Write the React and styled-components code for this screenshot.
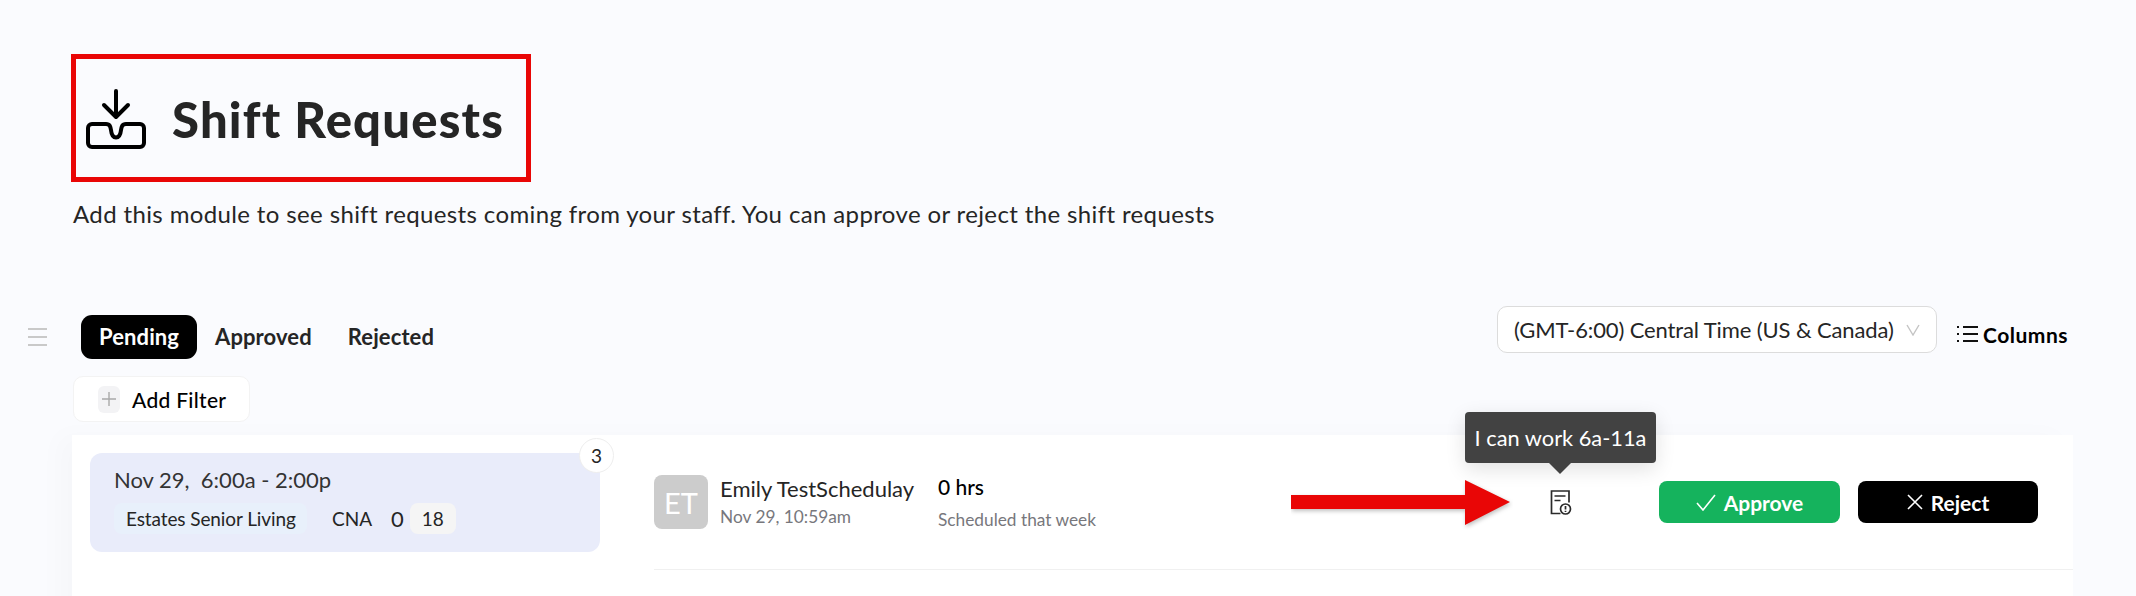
import React from "react";
import styled, { createGlobalStyle } from "styled-components";

const GlobalStyle = createGlobalStyle`
  html, body {
    margin: 0;
    padding: 0;
    background: #fafbfe;
    font-family: "Lato", "Noto Sans", sans-serif;
    color: #252525;
  }
  * {
    box-sizing: border-box;
  }
`;

const Page = styled.div`
  height: 596px;
  overflow: hidden;
  padding: 54px 63px 0 28px;
`;

const TitleBox = styled.div`
  display: flex;
  align-items: center;
  gap: 26px;
  width: 460px;
  height: 128px;
  margin-left: 43px;
  padding: 2px 0 0 10px;
  border: 5px solid #e90606;
`;

const Title = styled.h1`
  margin: 0;
  font-size: 49px;
  font-weight: 900;
  letter-spacing: 1.2px;
  color: #252525;
`;

const Subtitle = styled.p`
  margin: 18px 0 0 45px;
  font-size: 24px;
  line-height: 28px;
  letter-spacing: 0.37px;
  color: #252525;
`;

const TopRow = styled.div`
  display: flex;
  justify-content: space-between;
  height: 70px;
  margin-top: 78px;
`;

const LeftGroup = styled.div`
  display: flex;
  align-items: flex-start;
  padding-top: 9px;
`;

const Handle = styled.div`
  display: flex;
  flex-direction: column;
  gap: 6px;
  width: 19px;
  margin: 13px 34px 0 0;

  span {
    height: 2px;
    background: #c9c9c9;
  }
`;

const Tab = styled.div`
  display: flex;
  align-items: center;
  height: 44px;
  padding: 0 18px 2px;
  border-radius: 11px;
  font-size: 22px;
  font-weight: 700;
  letter-spacing: 0.1px;
  color: ${(props) => (props.active ? "#fff" : "#252525")};
  background: ${(props) => (props.active ? "#000" : "transparent")};
`;

const RightGroup = styled.div`
  display: flex;
  align-items: flex-start;
  padding-right: 5px;
`;

const ZoneSelect = styled.div`
  display: flex;
  align-items: center;
  justify-content: space-between;
  width: 440px;
  height: 47px;
  padding: 0 16px;
  background: #fff;
  border: 1px solid #dcdcdc;
  border-radius: 10px;
  font-size: 22px;
  letter-spacing: -0.12px;
  color: #252525;
`;

const ColumnsButton = styled.div`
  display: flex;
  align-items: center;
  gap: 5px;
  height: 24px;
  margin: 16px 0 0 20px;
  font-size: 21px;
  font-weight: 700;
  letter-spacing: 0.5px;
  color: #000;
`;

const FilterButton = styled.div`
  display: flex;
  align-items: center;
  gap: 12px;
  width: 177px;
  height: 46px;
  margin-left: 45px;
  padding-left: 24px;
  background: #fff;
  border: 1px solid #f3f3f3;
  border-radius: 10px;
  font-size: 21px;
  font-weight: 500;
  letter-spacing: 0.3px;
  color: #000;
`;

const PlusBox = styled.span`
  display: flex;
  align-items: center;
  justify-content: center;
  width: 22px;
  height: 27px;
  background: #f3f3f5;
  border-radius: 6px;
`;

const Panel = styled.section`
  display: flex;
  align-items: flex-start;
  height: 300px;
  margin: 13px 0 0 44px;
  padding: 0 0 0 18px;
  background: #fff;
  box-shadow: -14px 0 24px rgba(0, 0, 0, 0.02);
`;

const ShiftCard = styled.div`
  position: relative;
  flex: none;
  width: 510px;
  height: 99px;
  margin-top: 18px;
  padding: 14px 24px;
  background: #e9ecfa;
  border-radius: 12px;
`;

const CountBadge = styled.span`
  position: absolute;
  top: -15px;
  right: -14px;
  display: flex;
  align-items: center;
  justify-content: center;
  width: 35px;
  height: 35px;
  background: #fff;
  border: 1px solid #eeeeee;
  border-radius: 50%;
  font-size: 19px;
  color: #252525;
`;

const ShiftTime = styled.div`
  font-size: 22px;
  line-height: 26px;
  color: #333;
  white-space: pre;
`;

const ShiftMeta = styled.div`
  display: flex;
  align-items: center;
  margin-top: 10px;
  font-size: 19px;
  color: #252525;
`;

const SiteChip = styled.span`
  display: flex;
  align-items: center;
  width: 193px;
  height: 31px;
  padding-left: 12px;
  background: #e8f0fb;
  border-radius: 8px;
  letter-spacing: -0.1px;
`;

const Role = styled.span`
  margin-left: 25px;
`;

const FilledCount = styled.span`
  margin: 0 6px 0 19px;
  font-size: 22px;
`;

const NeededChip = styled.span`
  display: flex;
  align-items: center;
  justify-content: center;
  width: 46px;
  height: 31px;
  background: #f5f5f5;
  border-radius: 8px;
`;

const RequestRow = styled.div`
  flex: 1;
  display: flex;
  align-items: center;
  height: 135px;
  margin-left: 54px;
  padding-right: 35px;
  border-bottom: 1px solid #f0f0f0;
`;

const Avatar = styled.div`
  flex: none;
  display: flex;
  align-items: center;
  justify-content: center;
  width: 54px;
  height: 54px;
  background: #cccccc;
  border-radius: 8px;
  font-size: 29px;
  color: #fff;
`;

const Person = styled.div`
  width: 218px;
  margin-left: 12px;
`;

const PersonName = styled.div`
  font-size: 22px;
  line-height: 28px;
  color: #252525;
`;

const MutedText = styled.div`
  margin-top: ${(props) => props.top || 2}px;
  font-size: 17.3px;
  line-height: 24px;
  color: #77777c;
`;

const Hours = styled.div`
  flex: 1;
`;

const HoursValue = styled.div`
  font-size: 21px;
  font-weight: 500;
  line-height: 28px;
  color: #000;
`;

const NoteIcon = styled.div`
  position: relative;
  width: 22px;
  height: 25px;
  margin-right: 87px;
`;

const Tooltip = styled.div`
  position: absolute;
  bottom: 52px;
  left: -85px;
  display: flex;
  align-items: center;
  justify-content: center;
  width: 191px;
  height: 51px;
  background: #424242;
  border-radius: 4px;
  box-shadow: 0 6px 20px rgba(0, 0, 0, 0.12);
  font-size: 21.8px;
  color: #fff;
  white-space: nowrap;

  &::after {
    content: "";
    position: absolute;
    top: 100%;
    left: 84px;
    border: 11px solid transparent;
    border-top-color: #424242;
    border-bottom: 0;
  }
`;

const RedArrow = styled.svg`
  position: absolute;
  top: -10px;
  left: -259px;
`;

const ActionButton = styled.div`
  flex: none;
  display: flex;
  align-items: center;
  justify-content: center;
  gap: 8px;
  width: ${(props) => props.width}px;
  height: 42px;
  margin-left: ${(props) => props.gap || 0}px;
  background: ${(props) => props.bg};
  border-radius: 8px;
  font-size: 21px;
  font-weight: 700;
  color: #fff;
`;

const InboxIcon = () => (
  <svg width="60" height="60" viewBox="0 0 60 60" fill="none" stroke="#000" strokeWidth="4" strokeLinecap="round" strokeLinejoin="round">
    <path d="M30 2V27" />
    <path d="M18 16L30 28L42 16" />
    <path d="M20 35C24 35 24.5 38 25 41C26 51 34 51 35 41C35.5 38 36 35 40 35H54a4 4 0 0 1 4 4V54a4 4 0 0 1 -4 4H6a4 4 0 0 1 -4 -4V39a4 4 0 0 1 4 -4Z" />
  </svg>
);

const NoteGlyph = () => (
  <svg width="22" height="25" viewBox="0 0 22 25" fill="none" stroke="#2a2a2a" strokeWidth="1.7">
    <path d="M10.5 23.5H1.5V1H19V12.5" />
    <path d="M4.5 6H15.5M4.5 10.5H10.5" />
    <circle cx="15.5" cy="19" r="5" />
    <path d="M15.5 16V19.6M15.5 20.8V22" />
  </svg>
);

const App = () => (
  <>
    <GlobalStyle />
    <Page>
      <TitleBox>
        <InboxIcon />
        <Title>Shift Requests</Title>
      </TitleBox>
      <Subtitle>Add this module to see shift requests coming from your staff. You can approve or reject the shift requests</Subtitle>

      <TopRow>
        <LeftGroup>
          <Handle>
            <span />
            <span />
            <span />
          </Handle>
          <Tab active>Pending</Tab>
          <Tab>Approved</Tab>
          <Tab>Rejected</Tab>
        </LeftGroup>
        <RightGroup>
          <ZoneSelect>
            (GMT-6:00) Central Time (US &amp; Canada)
            <svg width="14" height="12" viewBox="0 0 14 12" fill="none" stroke="#c4c4c4" strokeWidth="1.4">
              <path d="M1 1L7 11L13 1" />
            </svg>
          </ZoneSelect>
          <ColumnsButton>
            <svg width="21" height="20" viewBox="0 0 21 20" fill="none" stroke="#111" strokeWidth="2">
              <path d="M6 3H21M6 10H21M6 17H21" />
              <path d="M0 3H3M0 10H3M0 17H3" strokeDasharray="2 1" />
            </svg>
            Columns
          </ColumnsButton>
        </RightGroup>
      </TopRow>

      <FilterButton>
        <PlusBox>
          <svg width="14" height="14" viewBox="0 0 14 14" stroke="#a9a9a9" strokeWidth="1.4">
            <path d="M7 0V14M0 7H14" />
          </svg>
        </PlusBox>
        Add Filter
      </FilterButton>

      <Panel>
        <ShiftCard>
          <CountBadge>3</CountBadge>
          <ShiftTime>Nov 29,  6:00a - 2:00p</ShiftTime>
          <ShiftMeta>
            <SiteChip>Estates Senior Living</SiteChip>
            <Role>CNA</Role>
            <FilledCount>0</FilledCount>
            <NeededChip>18</NeededChip>
          </ShiftMeta>
        </ShiftCard>

        <RequestRow>
          <Avatar>ET</Avatar>
          <Person>
            <PersonName>Emily TestSchedulay</PersonName>
            <MutedText>Nov 29, 10:59am</MutedText>
          </Person>
          <Hours>
            <HoursValue>0 hrs</HoursValue>
            <MutedText top={7}>Scheduled that week</MutedText>
          </Hours>
          <NoteIcon>
            <NoteGlyph />
            <Tooltip>I can work 6a-11a</Tooltip>
            <RedArrow width="222" height="50" viewBox="0 0 222 50">
              <path d="M0 15H174V0L219 22L174 45V29H0Z" fill="#e90606" style={{ filter: "drop-shadow(1px 2px 2px rgba(0,0,0,0.25))" }} />
            </RedArrow>
          </NoteIcon>
          <ActionButton width={181} bg="#15b35d">
            <svg width="20" height="17" viewBox="0 0 20 17" fill="none" stroke="#fff" strokeWidth="1.6">
              <path d="M1 9L7 16L19 1" />
            </svg>
            Approve
          </ActionButton>
          <ActionButton width={180} gap={18} bg="#000">
            <svg width="16" height="16" viewBox="0 0 16 16" fill="none" stroke="#fff" strokeWidth="1.6">
              <path d="M1 1L15 15M15 1L1 15" />
            </svg>
            Reject
          </ActionButton>
        </RequestRow>
      </Panel>
    </Page>
  </>
);

export default App;
